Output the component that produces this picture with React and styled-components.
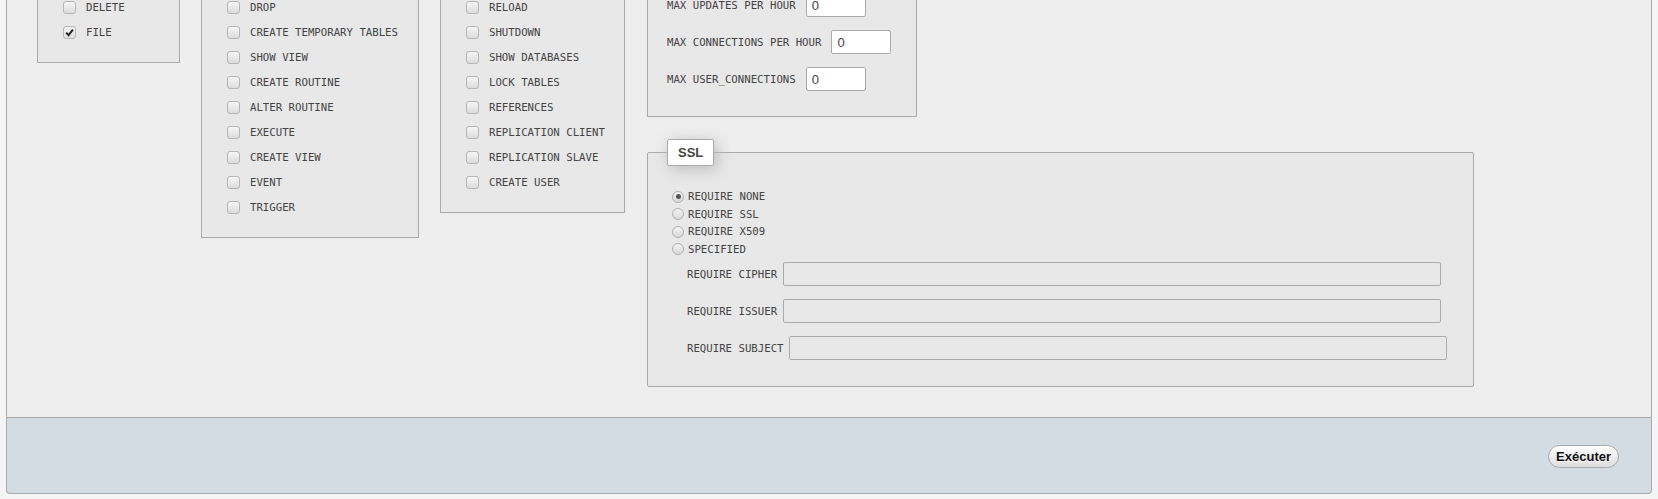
import React from 'react';
import styled, { createGlobalStyle } from 'styled-components';

const GlobalStyle = createGlobalStyle`
  body {
    margin: 0;
    background: #f5f5f5;
    font-family: "DejaVu Sans Mono", monospace;
  }
`;

// only the rows that are still in view after the page was scrolled
const data = ['DELETE', 'FILE'];
const structure = [
  'DROP', 'CREATE TEMPORARY TABLES', 'SHOW VIEW', 'CREATE ROUTINE', 'ALTER ROUTINE',
  'EXECUTE', 'CREATE VIEW', 'EVENT', 'TRIGGER',
];
const admin = [
  'RELOAD', 'SHUTDOWN', 'SHOW DATABASES', 'LOCK TABLES', 'REFERENCES',
  'REPLICATION CLIENT', 'REPLICATION SLAVE', 'CREATE USER',
];
const limits = ['MAX UPDATES PER HOUR', 'MAX CONNECTIONS PER HOUR', 'MAX USER_CONNECTIONS'];
const sslOptions = ['REQUIRE NONE', 'REQUIRE SSL', 'REQUIRE X509', 'SPECIFIED'];
const sslFields = [
  { label: 'REQUIRE CIPHER', gap: 6 },
  { label: 'REQUIRE ISSUER', gap: 6 },
  { label: 'REQUIRE SUBJECT', gap: 5 },
];

function App() {
  return (
    <Page>
      <GlobalStyle />
      <MainFieldset>
        <Columns>
          <PrivBox $width={143}>
            {data.map((p) => (
              <CheckRow key={p}>
                <CheckBox>
                  {p === 'FILE' && (
                    <svg width="9" height="9" viewBox="0 0 9 9">
                      <path d="M1.2 4.6 L3.6 7.2 L7.9 1.6" fill="none" stroke="#222" strokeWidth="1.9" />
                    </svg>
                  )}
                </CheckBox>
                {p}
              </CheckRow>
            ))}
          </PrivBox>
          <PrivBox $width={218}>
            {structure.map((p) => (
              <CheckRow key={p}>
                <CheckBox />
                {p}
              </CheckRow>
            ))}
          </PrivBox>
          <PrivBox $width={185}>
            {admin.map((p) => (
              <CheckRow key={p}>
                <CheckBox />
                {p}
              </CheckRow>
            ))}
          </PrivBox>
          <SideColumn>
            <LimitsBox>
              {limits.map((l) => (
                <LimitRow key={l}>
                  <span>{l}</span>
                  <NumberInput defaultValue="0" />
                </LimitRow>
              ))}
            </LimitsBox>
            <SslFieldset>
              <Legend>SSL</Legend>
              {sslOptions.map((o, i) => (
                <RadioRow key={o}>
                  <Radio $checked={i === 0} />
                  {o}
                </RadioRow>
              ))}
              <SslFields>
                {sslFields.map((f) => (
                  <SslRow key={f.label} $gap={f.gap}>
                    <span>{f.label}</span>
                    <TextInput />
                  </SslRow>
                ))}
              </SslFields>
            </SslFieldset>
          </SideColumn>
        </Columns>
      </MainFieldset>
      <Footer>
        <SubmitButton>Exécuter</SubmitButton>
      </Footer>
    </Page>
  );
}

export default App;

const Page = styled.div`
  padding: 0 6px;
  margin-top: -141px;
  color: #444;
  font-size: 10.7px;
`;

const MainFieldset = styled.div`
  box-sizing: border-box;
  border: 1px solid #aaa;
  border-radius: 4px 4px 0 0;
  background: #eee;
  padding: 20px 0 30px 30px;
`;

const Columns = styled.div`
  display: flex;
  align-items: flex-start;
`;

const PrivBox = styled.div`
  box-sizing: border-box;
  width: ${(p) => p.$width}px;
  margin-right: 21px;
  border: 1px solid #aaa;
  background: #e8e8e8;
  padding: 114px 0 17px 25px;
`;

const CheckRow = styled.label`
  display: flex;
  align-items: center;
  gap: 10px;
  height: 25px;
  white-space: nowrap;
`;

const CheckBox = styled.span`
  box-sizing: border-box;
  flex: none;
  width: 13px;
  height: 13px;
  border: 1px solid #b5b5b5;
  border-radius: 3px;
  background: linear-gradient(#f6f6f6, #dcdcdc);
  display: inline-flex;
  align-items: center;
  justify-content: center;
`;

const SideColumn = styled.div`
  display: flex;
  flex-direction: column;
  margin-left: 1px;
`;

const LimitsBox = styled.div`
  box-sizing: border-box;
  width: 270px;
  border: 1px solid #aaa;
  background: #e8e8e8;
  padding: 112px 0 12px 19px;
`;

const LimitRow = styled.div`
  display: flex;
  align-items: center;
  gap: 10px;
  height: 24px;
  margin-bottom: 13px;
  white-space: nowrap;
`;

const NumberInput = styled.input`
  box-sizing: border-box;
  width: 60px;
  height: 24px;
  border: 1px solid #aaa;
  border-radius: 2px;
  background: #fff;
  padding: 0 5px;
  font: 13px "Liberation Sans", Arial, sans-serif;
  color: #444;
`;

const SslFieldset = styled.fieldset`
  box-sizing: border-box;
  width: 827px;
  margin: 22px 0 0;
  border: 1px solid #aaa;
  border-radius: 2px;
  background: #e8e8e8;
  padding: 22px 19px 26px;
  min-width: 0;
`;

const Legend = styled.legend`
  font: bold 13px/15px "Liberation Sans", Arial, sans-serif;
  color: #444;
  background: #fff;
  border: 1px solid #aaa;
  border-radius: 2px;
  padding: 5px 10px;
  margin: 0;
  box-shadow: 3px 3px 15px #bbb;
`;

const RadioRow = styled.label`
  display: flex;
  align-items: center;
  height: 17.5px;
  white-space: nowrap;
`;

const Radio = styled.span`
  box-sizing: border-box;
  flex: none;
  width: 12px;
  height: 12px;
  margin: 0 4px 0 5px;
  border: 1px solid #b0b0b0;
  border-radius: 50%;
  background: linear-gradient(#f4f4f4, #d8d8d8);
  display: inline-flex;
  align-items: center;
  justify-content: center;

  &::after {
    content: '';
    display: ${(p) => (p.$checked ? 'block' : 'none')};
    width: 5px;
    height: 5px;
    border-radius: 50%;
    background: #555;
  }
`;

const SslFields = styled.div`
  display: flex;
  flex-direction: column;
  gap: 13px;
  margin-top: 4px;
  padding-left: 20px;
`;

const SslRow = styled.div`
  display: flex;
  align-items: center;
  gap: ${(p) => p.$gap}px;
  white-space: nowrap;
`;

const TextInput = styled.input`
  box-sizing: border-box;
  width: 658px;
  height: 24px;
  border: 1px solid #aaa;
  border-radius: 2px;
  background: #e8e8e8;
`;

const Footer = styled.div`
  box-sizing: border-box;
  height: 76px;
  border: 1px solid #aaa;
  border-top: none;
  border-radius: 0 0 4px 4px;
  background: #d3dce3;
  display: flex;
  justify-content: flex-end;
  align-items: flex-start;
  padding: 27px 32px 0 0;
`;

const SubmitButton = styled.button`
  box-sizing: border-box;
  height: 23px;
  padding: 0 7px;
  border: 1px solid #aaa;
  border-radius: 12px;
  background: linear-gradient(#fff, #ddd);
  font: bold 13px "Liberation Sans", Arial, sans-serif;
  color: #111;
  text-shadow: 0 1px 0 #fff;
  cursor: pointer;
`;
